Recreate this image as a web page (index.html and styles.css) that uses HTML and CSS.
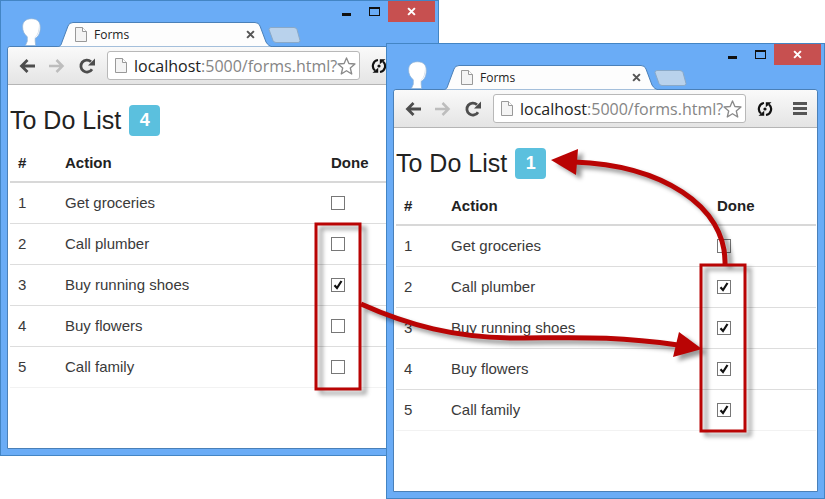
FILE: index.html
```
<!DOCTYPE html>
<html lang="en">
<head>
<meta charset="utf-8">
<title>Forms</title>
<link rel="stylesheet" href="styles.css">
</head>
<body>
<svg class="sprite" aria-hidden="true">
  <defs>
    <symbol id="i-user" viewBox="0 0 24 30"><path d="M12.500.8C19 .8 22 4.500 22 10c0 6-2 10-5.500 11.700V25l.5 4.500H6L8 25v-5C4.500 17.500 3 13.500 3 9.500 3 4 6.500.8 12.500.8z" fill="#fff" stroke="#8fb2d6" stroke-width=".8"/><path d="M20.500 6c1.200 6-.3 12-4 14.500l-4 2.500c5.500-2 8.500-8 8-17z" fill="#c3d3e4"/></symbol>
    <symbol id="i-page" viewBox="0 0 12 15"><path d="M.5.5h7l4 4v10H.5z" fill="#f4f4f4" stroke="#999"/><path d="M7.500.5v4h4" fill="#fff" stroke="#999"/></symbol>
    <symbol id="i-back" viewBox="0 0 16 14"><path d="M16 7H3M8.500 1 2.500 7l6 6" fill="none" stroke="currentColor" stroke-width="2.800"/></symbol>
    <symbol id="i-forward" viewBox="0 0 16 14"><path d="M0 7h13M7.500 1l6 6-6 6" fill="none" stroke="currentColor" stroke-width="2.500"/></symbol>
    <symbol id="i-reload" viewBox="0 0 17 16"><path d="M13 11.200A6 6 0 1 1 12 3.700" fill="none" stroke="currentColor" stroke-width="2.800"/><path d="M16 .5v7H9z" fill="currentColor"/></symbol>
    <symbol id="i-star" viewBox="0 0 20 20"><path d="M10 1.500l2.500 5.900 6.400.5-4.900 4.200 1.500 6.300L10 15l-5.500 3.400L6 12.100 1.100 7.900l6.400-.5z" fill="#fff" stroke="#8a8a8a" stroke-width="1.400" stroke-linejoin="round"/></symbol>
    <symbol id="i-sync" viewBox="0 0 16 16"><path d="M7 2A6 6 0 0 0 4 12.500M9 14A6 6 0 0 0 12 3.500" fill="none" stroke="#111" stroke-width="2.200"/><path d="M1.500 14.800h5.700V9.800zM14.500 1.200H8.800v5z" fill="#111"/><circle cx="8" cy="8" r="1.600" fill="#111"/></symbol>
    <symbol id="i-menu" viewBox="0 0 14 13"><path d="M0 1.500h14M0 6.500h14M0 11.500h14" stroke="#555" stroke-width="3"/></symbol>
    <symbol id="i-x" viewBox="0 0 8 8"><path d="M1 1l6 6M7 1 1 7" stroke="currentColor" stroke-width="1.800"/></symbol>
    <symbol id="i-check" viewBox="0 0 12 12"><path d="M2.500 6.200 5 9l4.500-7" fill="none" stroke="#111" stroke-width="2.200"/></symbol>
    <symbol id="i-tab" viewBox="0 0 216 25"><path d="M0 25C4 24 4 23 5 20L11 4Q12 .5 16 .5H198Q202 .5 203 4L209 20C211 23 212 24 216 25z" fill="#fdfdfd" stroke="#4a80b8"/></symbol>
    <symbol id="i-newtab" viewBox="0 0 33 16"><path d="M3 .5h23q2 0 3 2l3 11q0 2-2 2H8q-2 0-3-2l-4-11q0-2 2-2z" fill="#b9d2ec" stroke="#8aa9c8"/></symbol>
  </defs>
</svg>
<main class="desktop">
  <section class="window window-before">
    <header class="titlebar">
      <svg class="avatar"><use href="#i-user"/></svg>
      <div class="tab">
        <svg class="tab-shape"><use href="#i-tab"/></svg>
        <svg class="page-icon"><use href="#i-page"/></svg>
        <span class="tab-title">Forms</span>
        <button class="tab-close" aria-label="Close tab"><svg class="x-icon"><use href="#i-x"/></svg></button>
      </div>
      <button class="new-tab" aria-label="New tab"><svg class="newtab-shape"><use href="#i-newtab"/></svg></button>
      <div class="controls">
        <button class="minimize" aria-label="Minimize"></button>
        <button class="maximize" aria-label="Maximize"></button>
        <button class="close" aria-label="Close"><svg class="x-icon"><use href="#i-x"/></svg></button>
      </div>
    </header>
    <div class="client">
      <nav class="toolbar">
        <button class="tool" aria-label="Back"><svg class="arrow"><use href="#i-back"/></svg></button>
        <button class="tool disabled" aria-label="Forward"><svg class="arrow"><use href="#i-forward"/></svg></button>
        <button class="tool" aria-label="Reload"><svg class="reload"><use href="#i-reload"/></svg></button>
        <div class="address">
          <svg class="page-icon"><use href="#i-page"/></svg>
          <a class="url" href="#"><span class="host">localhost</span>:5000/forms.html?</a>
          <svg class="star"><use href="#i-star"/></svg>
        </div>
        <button class="tool sync" aria-label="Sync"><svg class="sync-icon"><use href="#i-sync"/></svg></button>
        <button class="tool menu" aria-label="Menu"><svg class="menu-icon"><use href="#i-menu"/></svg></button>
      </nav>
      <div class="page">
        <h1>To Do List <span class="badge">4</span></h1>
        <table>
          <thead><tr><th class="num">#</th><th>Action</th><th class="done">Done</th></tr></thead>
          <tbody>
            <tr><td>1</td><td>Get groceries</td><td><label class="check"><input type="checkbox" aria-label="Get groceries"><svg><use href="#i-check"/></svg></label></td></tr>
            <tr><td>2</td><td>Call plumber</td><td><label class="check"><input type="checkbox" aria-label="Call plumber"><svg><use href="#i-check"/></svg></label></td></tr>
            <tr><td>3</td><td>Buy running shoes</td><td><label class="check"><input type="checkbox" aria-label="Buy running shoes" checked><svg><use href="#i-check"/></svg></label></td></tr>
            <tr><td>4</td><td>Buy flowers</td><td><label class="check"><input type="checkbox" aria-label="Buy flowers"><svg><use href="#i-check"/></svg></label></td></tr>
            <tr><td>5</td><td>Call family</td><td><label class="check"><input type="checkbox" aria-label="Call family"><svg><use href="#i-check"/></svg></label></td></tr>
          </tbody>
        </table>
      </div>
    </div>
  </section>
  <section class="window window-after">
    <header class="titlebar">
      <svg class="avatar"><use href="#i-user"/></svg>
      <div class="tab">
        <svg class="tab-shape"><use href="#i-tab"/></svg>
        <svg class="page-icon"><use href="#i-page"/></svg>
        <span class="tab-title">Forms</span>
        <button class="tab-close" aria-label="Close tab"><svg class="x-icon"><use href="#i-x"/></svg></button>
      </div>
      <button class="new-tab" aria-label="New tab"><svg class="newtab-shape"><use href="#i-newtab"/></svg></button>
      <div class="controls">
        <button class="minimize" aria-label="Minimize"></button>
        <button class="maximize" aria-label="Maximize"></button>
        <button class="close" aria-label="Close"><svg class="x-icon"><use href="#i-x"/></svg></button>
      </div>
    </header>
    <div class="client">
      <nav class="toolbar">
        <button class="tool" aria-label="Back"><svg class="arrow"><use href="#i-back"/></svg></button>
        <button class="tool disabled" aria-label="Forward"><svg class="arrow"><use href="#i-forward"/></svg></button>
        <button class="tool" aria-label="Reload"><svg class="reload"><use href="#i-reload"/></svg></button>
        <div class="address">
          <svg class="page-icon"><use href="#i-page"/></svg>
          <a class="url" href="#"><span class="host">localhost</span>:5000/forms.html?</a>
          <svg class="star"><use href="#i-star"/></svg>
        </div>
        <button class="tool sync" aria-label="Sync"><svg class="sync-icon"><use href="#i-sync"/></svg></button>
        <button class="tool menu" aria-label="Menu"><svg class="menu-icon"><use href="#i-menu"/></svg></button>
      </nav>
      <div class="page">
        <h1>To Do List <span class="badge">1</span></h1>
        <table>
          <thead><tr><th class="num">#</th><th>Action</th><th class="done">Done</th></tr></thead>
          <tbody>
            <tr><td>1</td><td>Get groceries</td><td><label class="check"><input type="checkbox" aria-label="Get groceries"><svg><use href="#i-check"/></svg></label></td></tr>
            <tr><td>2</td><td>Call plumber</td><td><label class="check"><input type="checkbox" aria-label="Call plumber" checked><svg><use href="#i-check"/></svg></label></td></tr>
            <tr><td>3</td><td>Buy running shoes</td><td><label class="check"><input type="checkbox" aria-label="Buy running shoes" checked><svg><use href="#i-check"/></svg></label></td></tr>
            <tr><td>4</td><td>Buy flowers</td><td><label class="check"><input type="checkbox" aria-label="Buy flowers" checked><svg><use href="#i-check"/></svg></label></td></tr>
            <tr><td>5</td><td>Call family</td><td><label class="check"><input type="checkbox" aria-label="Call family" checked><svg><use href="#i-check"/></svg></label></td></tr>
          </tbody>
        </table>
      </div>
    </div>
  </section>
  <svg class="callouts" viewBox="0 0 825 499" aria-hidden="true">
    <g class="marks">
      <rect x="316" y="224" width="44" height="165"/>
      <rect x="701" y="265" width="44" height="166"/>
      <path class="line" d="M361 304C410 326 455 337 510 338C570 338 610 335 678 345"/>
      <path class="line" d="M725 265C727 205 660 165 574 162"/>
      <path class="head" d="M702 349 679 332 673 357z"/>
      <path class="head" d="M551 160 578 149 576 175z"/>
    </g>
  </svg>
</main>
</body>
</html>
```
FILE: styles.css
```
*, *::before { box-sizing: border-box; }
body { margin: 0; background: #fff; color: #3a3a3a; font: 15px/20px "Liberation Sans", Arial, sans-serif; }
button { padding: 0; border: 0; background: none; color: inherit; }
svg { display: block; }
.sprite { position: absolute; width: 0; height: 0; }
.desktop { position: relative; min-height: 499px; overflow: hidden; }

.window { position: absolute; width: 439px; padding: 0 6px 6px; border: 1px solid #4385c4; background: #6aacf6; }
.window-before { left: 0; top: 0; }
.window-after { left: 386px; top: 43px; }

.titlebar { display: flex; align-items: flex-end; height: 45px; padding-left: 12px; }
.avatar { width: 24px; height: 28px; margin-right: 14px; }
.tab { position: relative; z-index: 1; display: flex; align-items: center; width: 216px; height: 25px; padding: 0 18px 0 18px; margin-bottom: -1px; gap: 7px; }
.tab-shape { position: absolute; inset: 0; width: 100%; height: 100%; }
.tab .page-icon, .tab-title, .tab-close { position: relative; }
.tab-title { flex: 1; font: 12px/16px "Open Sans", "Noto Sans", sans-serif; color: #222; }
.page-icon { flex: none; width: 12px; height: 15px; }
.tab-close { color: #555; }
.x-icon { width: 9px; height: 9px; }
.new-tab { align-self: flex-end; margin: 0 0 3px -5px; }
.newtab-shape { width: 33px; height: 16px; }
.controls { display: flex; align-self: flex-start; margin-left: auto; margin-right: -3px; }
.controls button { height: 21px; }
.minimize, .maximize { width: 28px; }
.minimize::before { content: ""; display: block; width: 9px; height: 3px; margin: 6px auto 0; background: #111; }
.maximize::before { content: ""; display: block; width: 11px; height: 9px; margin: 0 auto; border: 1px solid #111; border-top-width: 2px; }
.controls .close { display: grid; place-items: center; width: 47px; background: #c75050; color: #fff; }

.client { border: 1px solid #4a80b8; border-radius: 3px 3px 0 0; background: #fff; }
.toolbar { display: flex; align-items: center; height: 38px; padding: 0 12px 0 11px; border-bottom: 1px solid #b5b5b5; border-radius: 3px 3px 0 0; background: linear-gradient(#fafafa, #e4e4e4); }
.tool { width: 16px; margin-right: 14px; color: #4d4d4d; }
.tool.disabled { color: #bdbdbd; }
.arrow { width: 16px; height: 14px; }
.reload { width: 17px; height: 16px; }
.address { display: flex; flex: 1; align-items: center; height: 29px; margin-left: -2px; padding: 0 3px 0 7px; border: 1px solid #b8b8b8; border-radius: 3px; background: #fff; }
.url { flex: 1; min-width: 0; margin-left: 7px; font: 16px/24px "Open Sans", "Noto Sans", sans-serif; color: #858585; text-decoration: none; white-space: nowrap; }
.host { color: #222; }
.star { flex: none; width: 19px; height: 20px; }
.sync { margin: 0 20px 0 11px; }
.sync-icon { width: 16px; height: 16px; }
.menu { width: 14px; margin: 0; }
.menu-icon { width: 14px; height: 13px; }

.page { padding: 20px 1px 60px 2px; }
h1 { display: flex; align-items: center; gap: 8px; margin: 0; font-size: 25px; line-height: 31px; font-weight: 400; color: #222; }
.badge { width: 31px; height: 31px; border-radius: 4px; background: #5bc0de; color: #fff; font-size: 18px; font-weight: 700; text-align: center; }
table { width: 100%; border-collapse: separate; border-spacing: 0; table-layout: fixed; }
th, td { padding: 0 8px; text-align: left; vertical-align: middle; }
th { height: 47px; padding-top: 9px; border-bottom: 2px solid #d8d8d8; color: #222; }
td { height: 41px; border-bottom: 1px solid #ddd; }
tbody tr:last-child td { border-bottom-color: #f2f2f2; }
.num { width: 47px; }
.done { width: 107px; }
.check { display: grid; width: 14px; height: 14px; }
.check > * { grid-area: 1 / 1; }
.check input { appearance: none; width: 14px; height: 14px; margin: 0; border: 1px solid #777; background: #fff; }
.check svg { visibility: hidden; place-self: center; width: 12px; height: 12px; pointer-events: none; }
.check input:checked + svg { visibility: visible; }

.callouts { position: absolute; left: 0; top: 0; width: 825px; height: 499px; pointer-events: none; }
.marks { fill: none; stroke: #b90404; stroke-width: 3; filter: drop-shadow(5px 4px 2px rgba(0, 0, 0, .4)); }
.marks .line { stroke-width: 5; }
.marks .head { fill: #b90404; stroke: none; }
```
